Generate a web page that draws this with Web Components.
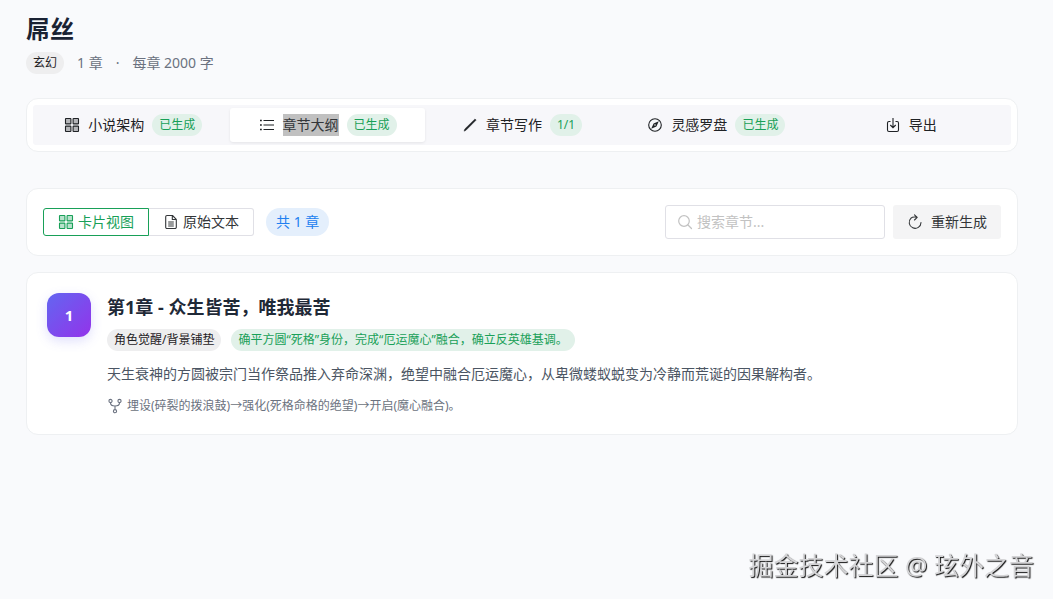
<!DOCTYPE html>
<html lang="zh-CN">
<head>
<meta charset="utf-8">
<meta name="viewport" content="width=device-width, initial-scale=1">
<title>屌丝</title>
<style>
  body {
    margin: 0;
    min-height: 100vh;
    background: #f9fafc;
    color: #1f2225;
    font: 14px/22px "Noto Sans", "Noto Sans CJK SC", sans-serif;
  }
</style>
</head>
<body>
<novel-page></novel-page>

<script>
const ICONS = {
  grid: `<g fill="currentColor" fill-opacity=".3" stroke="currentColor" stroke-width="1.1"><rect x="1.5" y="1.5" width="5.4" height="5.4" rx=".5"/><rect x="9.1" y="1.5" width="5.4" height="5.4" rx=".5"/><rect x="1.5" y="9.1" width="5.4" height="5.4" rx=".5"/><rect x="9.1" y="9.1" width="5.4" height="5.4" rx=".5"/></g>`,
  list: `<g fill="none" stroke="currentColor" stroke-width="1.2"><path d="M4.5 3.500H15M4.5 8H15M4.5 12.500H15"/><path d="M1 3.500h1.800M1 8h1.800M1 12.500h1.800" stroke-width="1.600"/></g>`,
  pen: `<path d="M2 14.2l.8-2.2L13 1.9l1.2 1.2L4 13.3z" fill="currentColor" stroke="currentColor" stroke-width=".4" stroke-linejoin="round"/>`,
  compass: `<circle cx="8" cy="8" r="6.3" fill="none" stroke="currentColor" stroke-width="1.1"/><path fill-rule="evenodd" d="M11.8 4.200L9.400 9.400 4.200 11.8 6.600 6.600zM8 7.200a.8.8 0 100 1.600.8.8 0 000-1.600z" fill="currentColor"/>`,
  download: `<path d="M5.5 4.5H4A1.5 1.5 0 002.500 6v7A1.500 1.500 0 004 14.500h8a1.500 1.500 0 001.500-1.500V6A1.500 1.500 0 0012 4.500h-1.500M8 1v9.500M5.300 8L8 10.700 10.700 8" fill="none" stroke="currentColor" stroke-width="1.1"/>`,
  file: `<path d="M9.5 1.500H4A1.300 1.300 0 002.700 2.800v10.400A1.300 1.300 0 004 14.500h8a1.300 1.300 0 001.300-1.300V5.300zM9.300 1.700v3.800h3.800M5.200 8h5.600M5.200 10h5.600M5.200 12h5.600" fill="none" stroke="currentColor" stroke-width="1.1" stroke-linejoin="round"/>`,
  search: `<g fill="none" stroke="currentColor" stroke-width="1.2" stroke-linecap="round"><circle cx="7" cy="7" r="5.3"/><path d="M11 11l3.500 3.500"/></g>`,
  reload: `<path d="M4 4.200A5.900 5.900 0 1014 8.500M3.800 4.300C5.300 2.900 7 2.700 9.800 3.300M7.500.8L10.200 3.400 7.500 6" fill="none" stroke="currentColor" stroke-width="1.1" stroke-linecap="round" stroke-linejoin="round"/>`,
  branch: `<g fill="none" stroke="currentColor" stroke-width="1.1"><circle cx="3.500" cy="3" r="1.600"/><circle cx="12.500" cy="3" r="1.600"/><circle cx="8" cy="13.200" r="1.600"/><path d="M3.500 4.700C3.500 7.500 5 8 8 8s4.500-.5 4.500-3.300M8 8v3.500"/></g>`
};

class UiIcon extends HTMLElement {
  constructor() {
    super();
    this.attachShadow({ mode: "open" });
  }

  connectedCallback() {
    this.shadowRoot.innerHTML = `
      <style>
        :host { display: inline-flex; flex: none; width: 16px; height: 16px; }
        svg { width: 100%; height: 100%; }
      </style>
      <svg viewBox="0 0 16 16" aria-hidden="true">${ICONS[this.getAttribute("name")]}</svg>
    `;
  }
}

class UiTag extends HTMLElement {
  constructor() {
    super();
    this.attachShadow({ mode: "open" });
    this.shadowRoot.innerHTML = `
      <style>
        :host {
          display: inline-flex;
          align-items: center;
          padding: 0 7px;
          border-radius: 14px;
          background: #eeeeef;
          color: #1f2225;
          font-size: 12px;
          line-height: 22px;
        }
        :host([type="success"]) { background: #e1f1e9; color: #18a058; }
        :host([type="info"]) {
          background: #e4effc;
          color: #2080f0;
          padding: 0 10px;
          font-size: 14px;
          line-height: 28px;
        }
      </style>
      <slot></slot>
    `;
  }
}

class UiCard extends HTMLElement {
  constructor() {
    super();
    this.attachShadow({ mode: "open" });
    this.shadowRoot.innerHTML = `
      <style>
        :host {
          display: block;
          background: #fff;
          border: 1px solid #eef0f2;
          border-radius: 12px;
        }
      </style>
      <slot></slot>
    `;
  }
}

class NovelHeader extends HTMLElement {
  constructor() {
    super();
    this.attachShadow({ mode: "open" });
    this.shadowRoot.innerHTML = `
      <style>
        :host { display: block; }
        h1 {
          margin: 0;
          color: #1a2233;
          font-size: 24px;
          line-height: 32px;
        }
        .meta {
          display: flex;
          align-items: center;
          gap: 13px;
          margin-top: 7px;
          color: #6b7280;
        }
      </style>
      <h1>屌丝</h1>
      <div class="meta">
        <ui-tag>玄幻</ui-tag>
        <span>1 章</span>
        <span>·</span>
        <span>每章 2000 字</span>
      </div>
    `;
  }
}

class NovelTabs extends HTMLElement {
  constructor() {
    super();
    this.attachShadow({ mode: "open" });
    this.shadowRoot.innerHTML = `
      <style>
        :host { display: block; }
        ui-card { padding: 6px; }
        nav {
          display: grid;
          grid-template-columns: repeat(5, 1fr);
          padding: 3px;
          background: #f7f7fa;
          border-radius: 3px;
        }
        button {
          display: flex;
          align-items: center;
          justify-content: center;
          gap: 8px;
          height: 34px;
          padding: 0;
          border: 0;
          border-radius: 3px;
          background: none;
          color: inherit;
          font: inherit;
          cursor: pointer;
        }
        button[aria-selected="true"] {
          background: #fff;
          box-shadow: 0 1px 3px rgba(0, 0, 0, .08);
        }
        mark { background: #c0c0c0; color: #333639; }
      </style>
      <ui-card>
        <nav role="tablist">
          <button role="tab" aria-selected="false"><ui-icon name="grid"></ui-icon><span>小说架构</span><ui-tag type="success">已生成</ui-tag></button>
          <button role="tab" aria-selected="true"><ui-icon name="list"></ui-icon><mark>章节大纲</mark><ui-tag type="success">已生成</ui-tag></button>
          <button role="tab" aria-selected="false"><ui-icon name="pen"></ui-icon><span>章节写作</span><ui-tag type="success">1/1</ui-tag></button>
          <button role="tab" aria-selected="false"><ui-icon name="compass"></ui-icon><span>灵感罗盘</span><ui-tag type="success">已生成</ui-tag></button>
          <button role="tab" aria-selected="false"><ui-icon name="download"></ui-icon><span>导出</span></button>
        </nav>
      </ui-card>
    `;
  }
}

class ChapterToolbar extends HTMLElement {
  constructor() {
    super();
    this.attachShadow({ mode: "open" });
    this.shadowRoot.innerHTML = `
      <style>
        :host { display: block; }
        ui-card { padding: 16px; }
        .row, .left, .right, .group, button, .search {
          display: flex;
          align-items: center;
        }
        .row { justify-content: space-between; }
        .left { gap: 12px; }
        .right { gap: 8px; }
        button {
          box-sizing: border-box;
          border: 1px solid #e0e0e6;
          background: #fff;
          color: #333639;
          font: inherit;
          cursor: pointer;
        }
        .group button { gap: 4px; height: 28px; padding: 0 14px; }
        .group .active {
          border-color: #18a058;
          border-radius: 3px 0 0 3px;
          color: #18a058;
        }
        .group .active + button { border-left: 0; border-radius: 0 3px 3px 0; }
        .search {
          box-sizing: border-box;
          gap: 4px;
          width: 220px;
          height: 34px;
          padding: 0 11px;
          border: 1px solid #e0e0e6;
          border-radius: 3px;
          color: #c2c2c2;
        }
        input {
          flex: 1;
          min-width: 0;
          padding: 0;
          border: 0;
          outline: 0;
          background: none;
          color: #333639;
          font: inherit;
        }
        input::placeholder { color: #c2c2c2; }
        .again {
          gap: 8px;
          height: 34px;
          padding: 0 14px;
          border: 0;
          border-radius: 3px;
          background: #f4f4f5;
        }
      </style>
      <ui-card>
        <div class="row">
          <div class="left">
            <div class="group">
              <button class="active"><ui-icon name="grid"></ui-icon>卡片视图</button>
              <button><ui-icon name="file"></ui-icon>原始文本</button>
            </div>
            <ui-tag type="info">共 1 章</ui-tag>
          </div>
          <div class="right">
            <label class="search">
              <ui-icon name="search"></ui-icon>
              <input type="text" placeholder="搜索章节..." aria-label="搜索章节">
            </label>
            <button class="again"><ui-icon name="reload"></ui-icon>重新生成</button>
          </div>
        </div>
      </ui-card>
    `;
  }
}

class ChapterCard extends HTMLElement {
  constructor() {
    super();
    this.attachShadow({ mode: "open" });
    this.shadowRoot.innerHTML = `
      <style>
        :host { display: block; }
        ui-card { padding: 20px; }
        article { display: flex; gap: 16px; }
        .number {
          display: grid;
          place-items: center;
          flex: none;
          width: 44px;
          height: 44px;
          border-radius: 12px;
          background: linear-gradient(135deg, #6366f1, #9333ea);
          box-shadow: 0 4px 12px rgba(99, 102, 241, .2);
          color: #fff;
          font-size: 15px;
          font-weight: bold;
        }
        .body { flex: 1; min-width: 0; }
        h2 {
          margin: 0;
          color: #1f2937;
          font-size: 18px;
          line-height: 28px;
        }
        .tags {
          display: flex;
          flex-wrap: wrap;
          gap: 10px;
          margin-top: 8px;
        }
        p { margin: 12px 0 0; color: #4b5563; }
        .clue {
          display: flex;
          align-items: center;
          gap: 4px;
          margin-top: 13px;
          color: #6b7280;
          font-size: 12px;
          line-height: 16px;
        }
      </style>
      <ui-card>
        <article>
          <div class="number"><slot name="number"></slot></div>
          <div class="body">
            <h2><slot name="title"></slot></h2>
            <div class="tags"><slot name="tags"></slot></div>
            <p><slot></slot></p>
            <div class="clue"><ui-icon name="branch"></ui-icon><slot name="clue"></slot></div>
          </div>
        </article>
      </ui-card>
    `;
  }
}

class PageMark extends HTMLElement {
  constructor() {
    super();
    this.attachShadow({ mode: "open" });
    this.shadowRoot.innerHTML = `
      <style>
        :host {
          position: fixed;
          right: 19px;
          bottom: 16px;
          color: #d4d4d6;
          font-size: 25px;
          line-height: 36px;
          text-shadow: 1px 1px 1px #111;
          pointer-events: none;
        }
      </style>
      <slot></slot>
    `;
  }
}

class NovelPage extends HTMLElement {
  constructor() {
    super();
    this.attachShadow({ mode: "open" });
    this.shadowRoot.innerHTML = `
      <style>
        :host { display: block; padding: 13px 35px 24px 26px; }
        novel-tabs { margin-top: 24px; }
        chapter-toolbar { margin-top: 36px; }
        chapter-card { margin-top: 16px; }
      </style>
      <novel-header></novel-header>
      <novel-tabs></novel-tabs>
      <chapter-toolbar></chapter-toolbar>
      <chapter-card>
        <span slot="number">1</span>
        <span slot="title">第1章 - 众生皆苦，唯我最苦</span>
        <ui-tag slot="tags">角色觉醒/背景铺垫</ui-tag>
        <ui-tag slot="tags" type="success">确平方圆“死格”身份，完成“厄运魔心”融合，确立反英雄基调。</ui-tag>
        天生衰神的方圆被宗门当作祭品推入弃命深渊，绝望中融合厄运魔心，从卑微蝼蚁蜕变为冷静而荒诞的因果解构者。
        <span slot="clue">埋设(碎裂的拨浪鼓)→强化(死格命格的绝望)→开启(魔心融合)。</span>
      </chapter-card>
      <page-mark>掘金技术社区 @ 玹外之音</page-mark>
    `;
  }
}

customElements.define("ui-icon", UiIcon);
customElements.define("ui-tag", UiTag);
customElements.define("ui-card", UiCard);
customElements.define("novel-header", NovelHeader);
customElements.define("novel-tabs", NovelTabs);
customElements.define("chapter-toolbar", ChapterToolbar);
customElements.define("chapter-card", ChapterCard);
customElements.define("page-mark", PageMark);
customElements.define("novel-page", NovelPage);
</script>
</body>
</html>
